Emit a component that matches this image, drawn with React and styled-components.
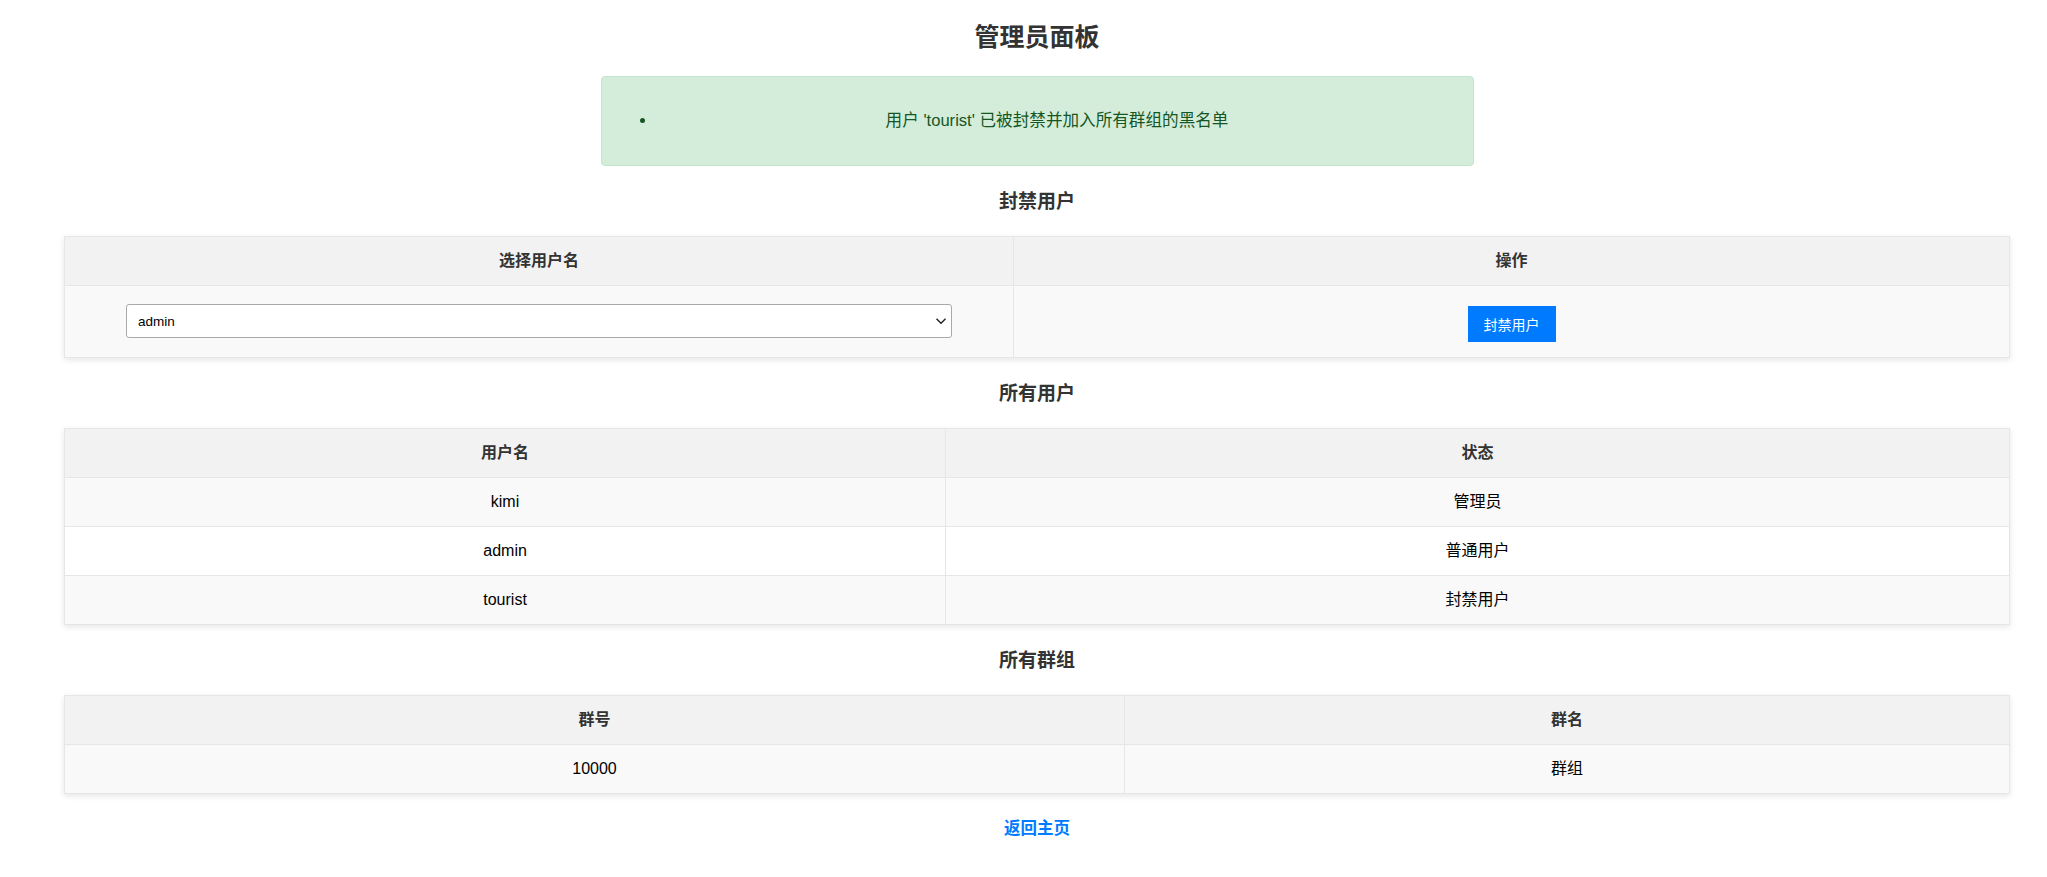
import React, { useState } from "react";
import styled, { createGlobalStyle } from "styled-components";

const GlobalStyle = createGlobalStyle`
  body {
    margin: 0;
    background: #ffffff;
    font-family: "Liberation Sans", "Noto Sans CJK SC", sans-serif;
    color: #000;
  }
  * {
    box-sizing: border-box;
  }
`;

const Page = styled.div`
  padding: 23px 37px 40px 64px;
`;

const Title = styled.h1`
  margin: 0;
  text-align: center;
  font-size: 25px;
  line-height: 28px;
  font-weight: bold;
  color: #333;
`;

const Alert = styled.div`
  width: 873px;
  margin: 25px auto 0;
  padding: 15px;
  border: 1px solid #c3e6cb;
  border-radius: 4px;
  background-color: #d4edda;
  color: #155724;
`;

const AlertList = styled.ul`
  margin: 16px 0;
  padding-left: 40px;
`;

const AlertItem = styled.li`
  font-size: 16.6px;
  line-height: 26px;
  text-align: center;
`;

const SectionTitle = styled.h3`
  margin: 25px 0 23px;
  text-align: center;
  font-size: 19px;
  line-height: 22px;
  font-weight: bold;
  color: #333;
`;

const Table = styled.table`
  width: 100%;
  border-collapse: collapse;
  table-layout: fixed;
  background: #fff;
  box-shadow: 0 2px 6px rgba(0, 0, 0, 0.1);

  tr:nth-child(even) {
    background-color: #f9f9f9;
  }
`;

const Th = styled.th`
  padding: 15px;
  border: 1px solid #e6e6e6;
  background-color: #f2f2f2;
  color: #333;
  font-size: 16px;
  line-height: 18px;
  font-weight: bold;
  text-align: center;
`;

const Td = styled.td`
  padding: 15px;
  border: 1px solid #e6e6e6;
  font-size: 16px;
  line-height: 18px;
  text-align: center;
  vertical-align: top;
`;

const SelectWrap = styled.div`
  position: relative;
  width: 90%;
  margin: 3px auto 4px;
`;

const Select = styled.select`
  display: block;
  width: 100%;
  height: 34px;
  padding: 0 30px 0 11px;
  border: 1px solid #a9a9a9;
  border-radius: 3px;
  background: #fff;
  font-family: "Liberation Sans", sans-serif;
  font-size: 13.5px;
  color: #000;
  appearance: none;
  -webkit-appearance: none;
  outline: none;
`;

const Chevron = styled.svg`
  position: absolute;
  right: 4px;
  top: 50%;
  transform: translateY(-50%);
  pointer-events: none;
`;

const Button = styled.button`
  display: inline-block;
  margin-top: 5px;
  height: 36px;
  padding: 0 16px;
  border: none;
  border-radius: 0;
  background-color: #007bff;
  color: #fff;
  font-family: "Liberation Sans", "Noto Sans CJK SC", sans-serif;
  font-size: 14px;
  cursor: pointer;
`;

const BackLink = styled.a`
  display: block;
  width: fit-content;
  margin: 24px auto 0;
  color: #007bff;
  font-size: 16.5px;
  line-height: 20px;
  font-weight: bold;
  text-decoration: none;
`;

const users = [
  { name: "kimi", status: "管理员" },
  { name: "admin", status: "普通用户" },
  { name: "tourist", status: "封禁用户" },
];

const groups = [{ id: "10000", name: "群组" }];

function App() {
  const [selected, setSelected] = useState("admin");

  return (
    <Page>
      <GlobalStyle />
      <Title>管理员面板</Title>

      <Alert>
        <AlertList>
          <AlertItem>用户 'tourist' 已被封禁并加入所有群组的黑名单</AlertItem>
        </AlertList>
      </Alert>

      <SectionTitle>封禁用户</SectionTitle>
      <Table>
        <colgroup>
          <col style={{ width: "48.8%" }} />
          <col />
        </colgroup>
        <tbody>
          <tr>
            <Th>选择用户名</Th>
            <Th>操作</Th>
          </tr>
          <tr>
            <Td>
              <SelectWrap>
                <Select value={selected} onChange={(e) => setSelected(e.target.value)}>
                  <option value="admin">admin</option>
                  <option value="tourist">tourist</option>
                </Select>
                <Chevron width="14" height="14" viewBox="0 0 14 14">
                  <path d="M2.5 4.8 L7 9.3 L11.5 4.8" fill="none" stroke="#222" strokeWidth="1.4" />
                </Chevron>
              </SelectWrap>
            </Td>
            <Td>
              <Button>封禁用户</Button>
            </Td>
          </tr>
        </tbody>
      </Table>

      <SectionTitle>所有用户</SectionTitle>
      <Table>
        <colgroup>
          <col style={{ width: "45.3%" }} />
          <col />
        </colgroup>
        <tbody>
          <tr>
            <Th>用户名</Th>
            <Th>状态</Th>
          </tr>
          {users.map((u) => (
            <tr key={u.name}>
              <Td>{u.name}</Td>
              <Td>{u.status}</Td>
            </tr>
          ))}
        </tbody>
      </Table>

      <SectionTitle>所有群组</SectionTitle>
      <Table>
        <colgroup>
          <col style={{ width: "54.5%" }} />
          <col />
        </colgroup>
        <tbody>
          <tr>
            <Th>群号</Th>
            <Th>群名</Th>
          </tr>
          {groups.map((g) => (
            <tr key={g.id}>
              <Td>{g.id}</Td>
              <Td>{g.name}</Td>
            </tr>
          ))}
        </tbody>
      </Table>

      <BackLink href="#">返回主页</BackLink>
    </Page>
  );
}

export default App;
